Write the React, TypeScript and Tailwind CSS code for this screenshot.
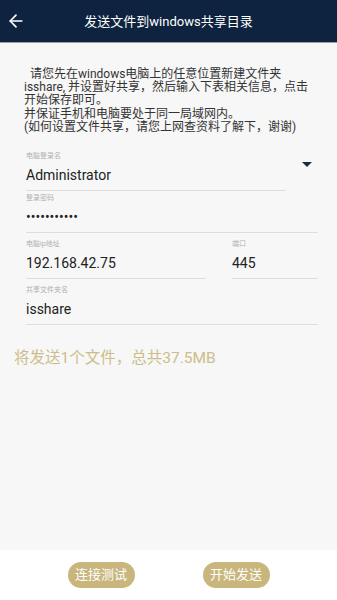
import { ArrowLeft } from "lucide-react";

const font = { fontFamily: '"Roboto", "Noto Sans CJK SC", sans-serif' };

function Field({
  label,
  value,
  className
}: {
  label: string;
  value: string;
  className: string;
}) {
  return (
    <div className={className}>
      <div className="h-[10px] text-[7px] leading-[10px] text-[#b0b0b0]">{label}</div>
      <div className="mt-[4px] h-[26px] border-b border-[#dedede] text-[14px] leading-[20px] text-[#222]">
        {value}
      </div>
    </div>
  );
}

export default function App() {
  return (
    <div className="flex h-[600px] w-[337px] flex-col bg-[#f7f7f7]" style={font}>
      <header className="relative flex h-[43px] shrink-0 items-center border-b border-[#9aa0a8] bg-[#0e233f]">
        <ArrowLeft className="ml-[6px] h-[20px] w-[20px] text-white" strokeWidth={2} />
        <h1 className="absolute left-0 right-0 top-[13px] text-center text-[13px] leading-[18px] text-white">
          发送文件到windows共享目录
        </h1>
      </header>

      <main className="flex-1">
        <p className="mt-[25px] px-[24px] text-[12px] leading-[13.2px] text-[#333]">
          &nbsp;&nbsp;请您先在windows电脑上的任意位置新建文件夹isshare, 并设置好共享，然后输入下表相关信息，点击开始保存即可。
          <br />
          并保证手机和电脑要处于同一局域网内。
          <br />
          (如何设置文件共享，请您上网查资料了解下，谢谢)
        </p>

        <div className="mt-[17px] flex">
          <Field label="电脑登录名" value="Administrator" className="ml-[26px] w-[260px]" />
          <svg className="ml-[16px] mt-[11px] h-[5px] w-[10px]" viewBox="0 0 10 5">
            <path d="M0 0 L10 0 L5 5 Z" fill="#1b2a3d" />
          </svg>
        </div>
        <Field label="登录密码" value="•••••••••••" className="ml-[26px] mt-[2px] w-[292px]" />
        <div className="mt-[6px] flex">
          <Field label="电脑ip地址" value="192.168.42.75" className="ml-[26px] w-[180px]" />
          <Field label="端口" value="445" className="ml-[26px] w-[86px]" />
        </div>
        <Field label="共享文件夹名" value="isshare" className="ml-[26px] mt-[6px] w-[292px]" />

        <p className="ml-[14px] mt-[23px] text-[15.5px] leading-[20px] text-[#cdbd8a]">
          将发送1个文件，总共37.5MB
        </p>
      </main>

      <footer className="flex h-[50px] shrink-0 items-center justify-center gap-[68px] bg-white">
        <button className="h-[26px] w-[67px] rounded-full bg-[#c8b67d] text-[13px] text-white">
          连接测试
        </button>
        <button className="h-[26px] w-[67px] rounded-full bg-[#c8b67d] text-[13px] text-white">
          开始发送
        </button>
      </footer>
    </div>
  );
}
